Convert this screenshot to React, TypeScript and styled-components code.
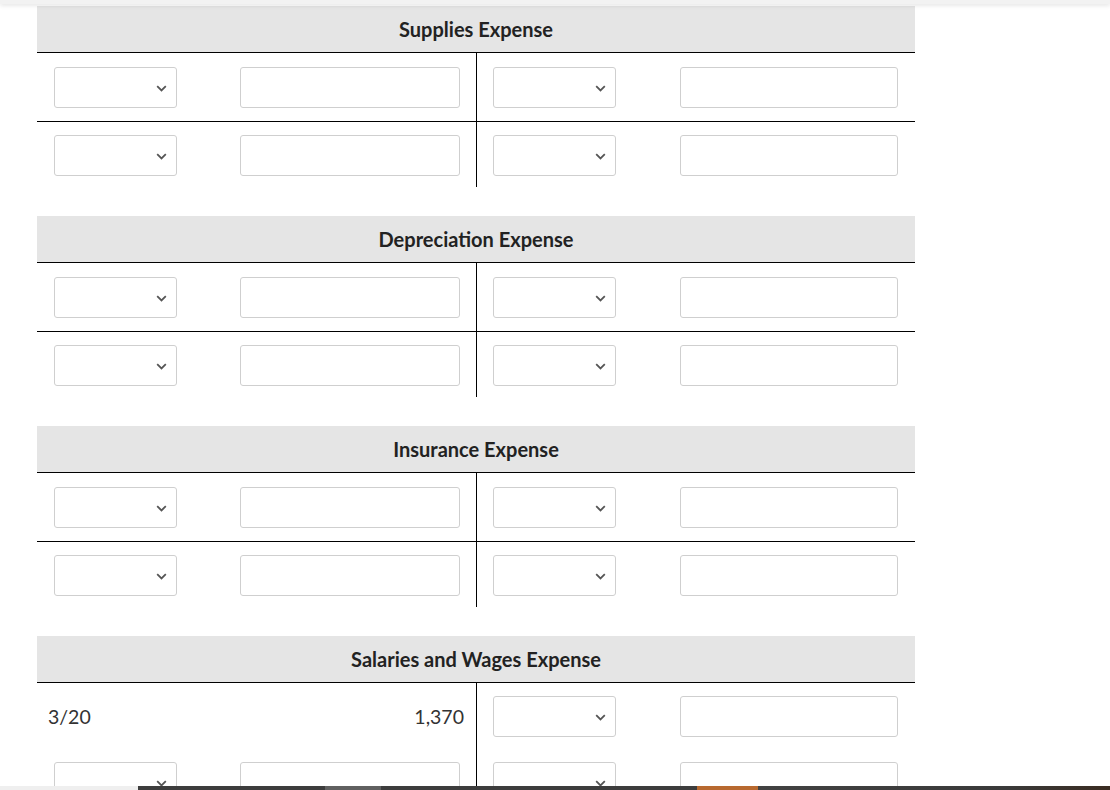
import React from 'react'
import styled, { createGlobalStyle } from 'styled-components'

const GlobalStyle = createGlobalStyle`
  html, body {
    margin: 0;
    padding: 0;
    background: #fff;
    overflow: hidden;
    font-family: Lato, "Open Sans", Arial, sans-serif;
    color: #333;
  }
`

const TopStrip = styled.div`
  position: fixed;
  top: 0;
  left: 0;
  right: 0;
  height: 4px;
  background: #f2f2f2;
  box-shadow: 0 1px 5px rgba(0, 0, 0, 0.14);
  z-index: 2;
`

const Page = styled.div`
  padding: 6px 0 0 37px;
  display: flex;
  flex-direction: column;
  gap: 29px;
`

const Account = styled.section`
  width: 878px;
  display: flex;
  flex-direction: column;
`

const Title = styled.div`
  height: 46px;
  background: #e5e5e5;
  border-bottom: 1px solid #000;
  display: flex;
  align-items: center;
  justify-content: center;
  font-size: 20px;
  font-weight: 700;
  color: #222;
`

interface RowProps {
  line?: boolean
  h?: number
}

const Row = styled.div<RowProps>`
  display: grid;
  grid-template-columns: 440px 438px;
  border-bottom: ${({ line }) => (line ? '1px solid #000' : 'none')};
  height: ${({ line, h }) => h ?? (line ? 69 : 65)}px;
  box-sizing: border-box;
`

interface SideProps {
  left?: boolean
  top?: number
}

const Side = styled.div<SideProps>`
  display: flex;
  align-items: flex-start;
  justify-content: space-between;
  padding: ${({ top = 14 }) => top}px ${({ left }) => (left ? '16px 0 17px' : '17px 0 16px')};
  border-right: ${({ left }) => (left ? '1px solid #000' : 'none')};
  box-sizing: border-box;
`

const TextSide = styled(Side)`
  align-items: center;
  padding: 0 12px 0 11px;
  font-size: 19.5px;
  color: #333;
`

const SelectBox = styled.div`
  position: relative;
  width: 123px;
  height: 41px;
  flex: none;
  box-sizing: border-box;
  border: 1px solid #cfcfcf;
  border-radius: 3px;
  background: #fff;
`

const Chevron = styled.svg`
  position: absolute;
  right: 9px;
  top: 17px;
`

interface FieldProps {
  w: number
}

const Field = styled.input<FieldProps>`
  width: ${({ w }) => w}px;
  height: 41px;
  flex: none;
  box-sizing: border-box;
  border: 1px solid #cfcfcf;
  border-radius: 3px;
  background: #fff;
  outline: none;
  padding: 0 8px;
  font-family: inherit;
`

const Segment = styled.div<{ c: string; w?: number }>`
  height: 4px;
  background: ${({ c }) => c};
  ${({ w }) => (w ? `width: ${w}px; flex: none;` : 'flex: 1;')}
`

const BottomBar = styled.div`
  position: fixed;
  left: 0;
  right: 0;
  bottom: 0;
  display: flex;
  z-index: 3;
`

const Select = () => (
  <SelectBox>
    <Chevron width="11" height="7" viewBox="0 0 11 7">
      <path d="M1.2 1.2l4.3 4.2 4.3-4.2" fill="none" stroke="#555" strokeWidth="1.8" />
    </Chevron>
  </SelectBox>
)

const EntryRow = ({ line }: RowProps) => {
  const top = line ? 14 : 13
  return (
    <Row line={line}>
      <Side left top={top}>
        <Select />
        <Field w={220} />
      </Side>
      <Side top={top}>
        <Select />
        <Field w={218} />
      </Side>
    </Row>
  )
}

const GivenRow = ({ date, amount }: { date: string; amount: string }) => (
  <Row h={66}>
    <TextSide left>
      <span>{date}</span>
      <span>{amount}</span>
    </TextSide>
    <Side top={13}>
      <Select />
      <Field w={218} />
    </Side>
  </Row>
)

const accounts = ['Supplies Expense', 'Depreciation Expense', 'Insurance Expense']

export default function App() {
  return (
    <>
      <GlobalStyle />
      <TopStrip />
      <Page>
        {accounts.map((name) => (
          <Account key={name}>
            <Title>{name}</Title>
            <EntryRow line />
            <EntryRow />
          </Account>
        ))}
        <Account>
          <Title>Salaries and Wages Expense</Title>
          <GivenRow date="3/20" amount="1,370" />
          <EntryRow />
        </Account>
      </Page>
      <BottomBar>
        <Segment c="#efefef" w={138} />
        <Segment c="#3d3d3d" w={187} />
        <Segment c="#606060" w={56} />
        <Segment c="#3d3d3d" w={316} />
        <Segment c="#b8692f" w={61} />
        <Segment c="linear-gradient(90deg, #424242, #3a3a3a 70%, #3b2c22)" />
      </BottomBar>
    </>
  )
}
